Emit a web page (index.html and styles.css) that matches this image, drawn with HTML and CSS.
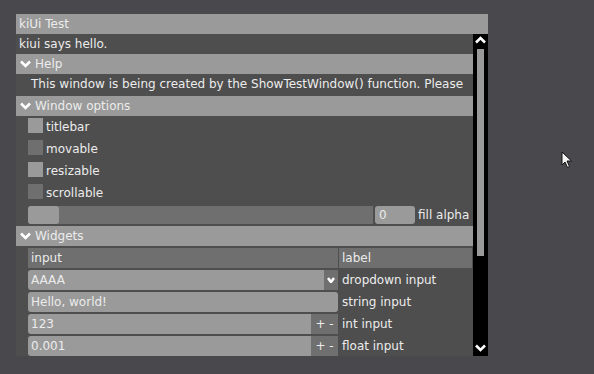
FILE: index.html
```html
<!DOCTYPE html>
<html lang="en">
<head>
    <meta charset="UTF-8">
    <meta name="viewport" content="width=device-width, initial-scale=1.0">
    <title>kiUi Test</title>
    <link rel="stylesheet" href="styles.css">
</head>
<body>

    <div class="window">
        <div class="titlebar">kiUi Test</div>

        <div class="window-body">
            <div class="content">
                <div class="line">kiui says hello.</div>

                <div class="header">
                    <svg class="chevron" width="11" height="8" viewBox="0 0 11 8"><polyline points="1,1.5 5.5,6 10,1.5" /></svg>
                    Help
                </div>
                <div class="line help-text">This window is being created by the ShowTestWindow() function. Please</div>

                <div class="header">
                    <svg class="chevron" width="11" height="8" viewBox="0 0 11 8"><polyline points="1,1.5 5.5,6 10,1.5" /></svg>
                    Window options
                </div>
                <div class="check-row"><span class="checkbox on"></span><span class="check-label">titlebar</span></div>
                <div class="check-row"><span class="checkbox"></span><span class="check-label">movable</span></div>
                <div class="check-row"><span class="checkbox on"></span><span class="check-label">resizable</span></div>
                <div class="check-row"><span class="checkbox"></span><span class="check-label">scrollable</span></div>

                <div class="slider-row">
                    <div class="slider"><span class="handle"></span></div>
                    <div class="number">0</div>
                    <span class="slider-label">fill alpha</span>
                </div>

                <div class="header">
                    <svg class="chevron" width="11" height="8" viewBox="0 0 11 8"><polyline points="1,1.5 5.5,6 10,1.5" /></svg>
                    Widgets
                </div>

                <div class="table">
                    <div class="row">
                        <div class="cell head">input</div>
                        <div class="cell head label-head">label</div>
                    </div>
                    <div class="row">
                        <div class="cell field">
                            <span class="value left">AAAA</span>
                            <span class="dropdown">
                                <svg width="8" height="6" viewBox="0 0 8 6"><polyline points="1,1 4,5 7,1" /></svg>
                            </span>
                        </div>
                        <div class="cell label">dropdown input</div>
                    </div>
                    <div class="row">
                        <div class="cell field">
                            <span class="value full">Hello, world!</span>
                        </div>
                        <div class="cell label">string input</div>
                    </div>
                    <div class="row">
                        <div class="cell field">
                            <span class="value left">123</span>
                            <span class="stepper">+ -</span>
                        </div>
                        <div class="cell label">int input</div>
                    </div>
                    <div class="row">
                        <div class="cell field">
                            <span class="value left">0.001</span>
                            <span class="stepper">+ -</span>
                        </div>
                        <div class="cell label">float input</div>
                    </div>
                </div>
            </div>

            <div class="scrollbar">
                <svg class="arrow" width="11" height="8" viewBox="0 0 11 8"><polyline points="1,6.5 5.5,2 10,6.5" /></svg>
                <div class="thumb"></div>
                <svg class="arrow down" width="11" height="8" viewBox="0 0 11 8"><polyline points="1,1.5 5.5,6 10,1.5" /></svg>
            </div>
        </div>
    </div>

    <svg class="cursor" width="12" height="18" viewBox="0 0 12 18">
        <path d="M1 1 L1 14 L4 11 L6.5 16.5 L8.5 15.5 L6 10 L10.5 10 Z" />
    </svg>

</body>
</html>
```

FILE: styles.css
```css
body {
    margin: 0;
    background-color: #49484d;
    font-family: "DejaVu Sans", sans-serif;
    font-size: 12px;
    color: #ececec;
    height: 374px;
    overflow: hidden;
}

.window {
    margin: 14px 0 0 16px;
    width: 472px;
}

.titlebar {
    height: 20px;
    line-height: 20px;
    padding-left: 3px;
    background-color: #9a9a9a;
}

.window-body {
    display: flex;
    height: 322px;
    background-color: #4e4e4e;
}

.content {
    width: 457px;
    overflow: hidden;
}

.line {
    height: 20px;
    line-height: 20px;
    padding-left: 3px;
    white-space: nowrap;
}

.help-text {
    height: 22px;
    line-height: 21px;
    padding-left: 15px;
}

.header {
    display: flex;
    align-items: center;
    height: 20px;
    background-color: #9a9a9a;
    padding-left: 4px;
}

.chevron {
    margin-right: 4px;
}
.chevron polyline,
.dropdown polyline,
.arrow polyline {
    fill: none;
    stroke: #ffffff;
    stroke-width: 2.6;
}

.check-row {
    display: flex;
    align-items: flex-start;
    height: 20px;
    padding: 2px 0 0 12px;
}

.checkbox {
    width: 15px;
    height: 15px;
    margin-right: 3px;
    background-color: #6f6f6f;
}
.checkbox.on {
    background-color: #9a9a9a;
}

.check-label {
    line-height: 18px;
}

.slider-row {
    display: flex;
    align-items: center;
    height: 18px;
    padding: 2px 0 2px 12px;
}

.slider {
    width: 345px;
    height: 18px;
    background-color: #6f6f6f;
    border-radius: 3px 0 0 3px;
}
.handle {
    display: block;
    width: 31px;
    height: 18px;
    border-radius: 3px;
    background-color: #9a9a9a;
}

.number {
    width: 36px;
    height: 18px;
    line-height: 18px;
    margin-left: 2px;
    padding-left: 4px;
    border-radius: 3px;
    background-color: #9a9a9a;
}

.slider-label {
    margin-left: 3px;
}

.table {
    padding-left: 12px;
}

.row {
    display: flex;
    margin-top: 2px;
    height: 20px;
}

.cell {
    height: 20px;
    line-height: 20px;
    white-space: nowrap;
}

.cell.head {
    width: 307px;
    padding-left: 3px;
    background-color: #6f6f6f;
}
.cell.head.label-head {
    width: 130px;
    margin-left: 1px;
}

.field {
    display: flex;
    width: 310px;
}

.value {
    padding-left: 3px;
    background-color: #9a9a9a;
    flex: 1;
}
.value.left {
    border-radius: 3px 0 0 3px;
}
.value.full {
    border-radius: 3px;
}

.dropdown {
    display: flex;
    align-items: center;
    justify-content: center;
    width: 14px;
    background-color: #6f6f6f;
}

.stepper {
    width: 27px;
    text-align: center;
    background-color: #6f6f6f;
}

.cell.label {
    padding-left: 4px;
}

.scrollbar {
    display: flex;
    flex-direction: column;
    align-items: center;
    width: 15px;
    background-color: #000000;
}

.arrow {
    margin-top: 2px;
}
.arrow.down {
    margin-top: 88px;
}

.thumb {
    width: 7px;
    height: 207px;
    margin-top: 5px;
    background-color: #9a9a9a;
}

.cursor {
    position: absolute;
    left: 561px;
    top: 151px;
}
.cursor path {
    fill: #f4f4f4;
    stroke: #111111;
    stroke-width: 1;
}
```
